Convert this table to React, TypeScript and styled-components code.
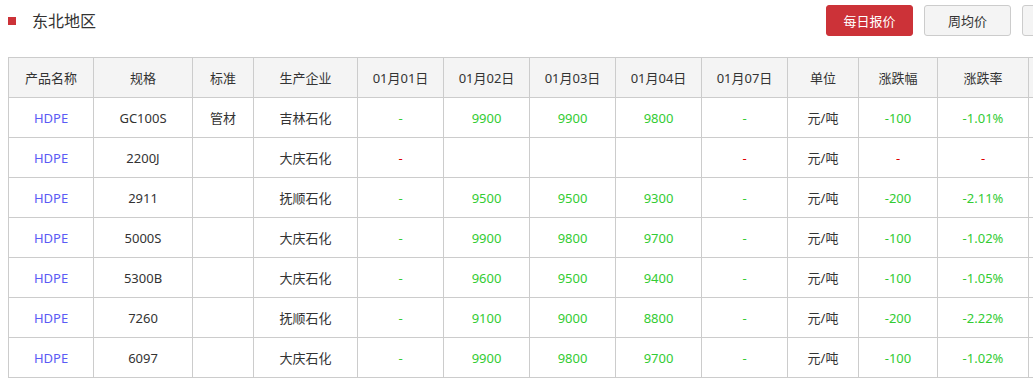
import styled, { createGlobalStyle } from 'styled-components';

type Tone = 'up' | 'down' | 'none' | 'plain';

interface PriceRow {
  spec: string;
  standard: string;
  maker: string;
  prices: string[];
  change: string;
  rate: string;
  tone: Tone;
}

const dates = ['01月01日', '01月02日', '01月03日', '01月04日', '01月07日'];
const widths = [85, 99, 61, 104, 86, 86, 86, 86, 86, 71, 79, 91, 81];

const rows: PriceRow[] = [
  { spec: 'GC100S', standard: '管材', maker: '吉林石化', prices: ['-', '9900', '9900', '9800', '-'], change: '-100', rate: '-1.01%', tone: 'down' },
  { spec: '2200J', standard: '', maker: '大庆石化', prices: ['-', '', '', '', '-'], change: '-', rate: '-', tone: 'none' },
  { spec: '2911', standard: '', maker: '抚顺石化', prices: ['-', '9500', '9500', '9300', '-'], change: '-200', rate: '-2.11%', tone: 'down' },
  { spec: '5000S', standard: '', maker: '大庆石化', prices: ['-', '9900', '9800', '9700', '-'], change: '-100', rate: '-1.02%', tone: 'down' },
  { spec: '5300B', standard: '', maker: '大庆石化', prices: ['-', '9600', '9500', '9400', '-'], change: '-100', rate: '-1.05%', tone: 'down' },
  { spec: '7260', standard: '', maker: '抚顺石化', prices: ['-', '9100', '9000', '8800', '-'], change: '-200', rate: '-2.22%', tone: 'down' },
  { spec: '6097', standard: '', maker: '大庆石化', prices: ['-', '9900', '9800', '9700', '-'], change: '-100', rate: '-1.02%', tone: 'down' },
];

const toneColor: Record<Tone, string> = {
  up: '#e00000',
  down: '#33cc33',
  none: '#e00000',
  plain: '#333333',
};

export default function App() {
  return (
    <>
      <GlobalStyle />
      <Page>
        <Header>
          <Title>东北地区</Title>
          <Tabs>
            <TabButton active>每日报价</TabButton>
            <TabButton>周均价</TabButton>
            <TabButton aria-label="月均价" />
          </Tabs>
        </Header>
        <Table>
          <colgroup>
            {widths.map((w, i) => (
              <col key={i} style={{ width: w }} />
            ))}
          </colgroup>
          <thead>
            <tr>
              <Th>产品名称</Th>
              <Th>规格</Th>
              <Th>标准</Th>
              <Th>生产企业</Th>
              {dates.map((d) => (
                <Th key={d}>{d}</Th>
              ))}
              <Th>单位</Th>
              <Th>涨跌幅</Th>
              <Th>涨跌率</Th>
              <Th />
            </tr>
          </thead>
          <tbody>
            {rows.map((r) => (
              <tr key={r.spec}>
                <Td tone="plain">
                  <ProductLink>HDPE</ProductLink>
                </Td>
                <Td tone="plain">{r.spec}</Td>
                <Td tone="plain">{r.standard}</Td>
                <Td tone="plain">{r.maker}</Td>
                {r.prices.map((p, i) => (
                  <Td key={i} tone={r.tone}>
                    {p}
                  </Td>
                ))}
                <Td tone="plain">元/吨</Td>
                <Td tone={r.tone}>{r.change}</Td>
                <Td tone={r.tone}>{r.rate}</Td>
                <Td tone="plain" />
              </tr>
            ))}
          </tbody>
        </Table>
      </Page>
    </>
  );
}

//#region STYLED COMPONENTS
const GlobalStyle = createGlobalStyle`
  body {
    margin: 0;
    background: #fff;
    overflow: hidden;
    font-family: "Noto Sans", "Noto Sans CJK SC", sans-serif;
    color: #333;
  }
`;

const Page = styled.div`
  width: 1101px;
  padding: 5px 0 0 8px;
`;

const Header = styled.div`
  display: flex;
  align-items: center;
  justify-content: space-between;
  height: 31px;
  margin-bottom: 21px;
`;

const Title = styled.h2`
  display: flex;
  align-items: center;
  gap: 16px;
  margin: 0;
  padding-top: 1px;
  font-size: 16px;
  font-weight: normal;
  color: #333;
  line-height: 1;
  &::before {
    content: '';
    width: 8px;
    height: 8px;
    background: #cc3238;
  }
`;

const Tabs = styled.div`
  display: flex;
  gap: 11px;
`;

const TabButton = styled.button<{ active?: boolean }>`
  width: 87px;
  height: 31px;
  padding: 0;
  border-radius: 3px;
  border: 1px solid ${({ active }) => (active ? '#cc3238' : '#cccccc')};
  background: ${({ active }) => (active ? '#cc3238' : '#f4f4f4')};
  color: ${({ active }) => (active ? '#fff' : '#333')};
  font-family: inherit;
  font-size: 13px;
  cursor: pointer;
`;

const Table = styled.table`
  width: 1101px;
  table-layout: fixed;
  border-collapse: collapse;
  font-size: 13px;
`;

const Th = styled.th`
  height: 39px;
  padding: 0;
  border: 1px solid #cccccc;
  background: #f4f4f4;
  font-weight: normal;
  color: #333;
  text-align: center;
  white-space: nowrap;
`;

const Td = styled.td<{ tone: Tone }>`
  height: 39px;
  padding: 0;
  border: 1px solid #cccccc;
  text-align: center;
  white-space: nowrap;
  color: ${({ tone }) => toneColor[tone]};
`;

const ProductLink = styled.a`
  color: #5a5af5;
  text-decoration: none;
  cursor: pointer;
`;
//#endregion
